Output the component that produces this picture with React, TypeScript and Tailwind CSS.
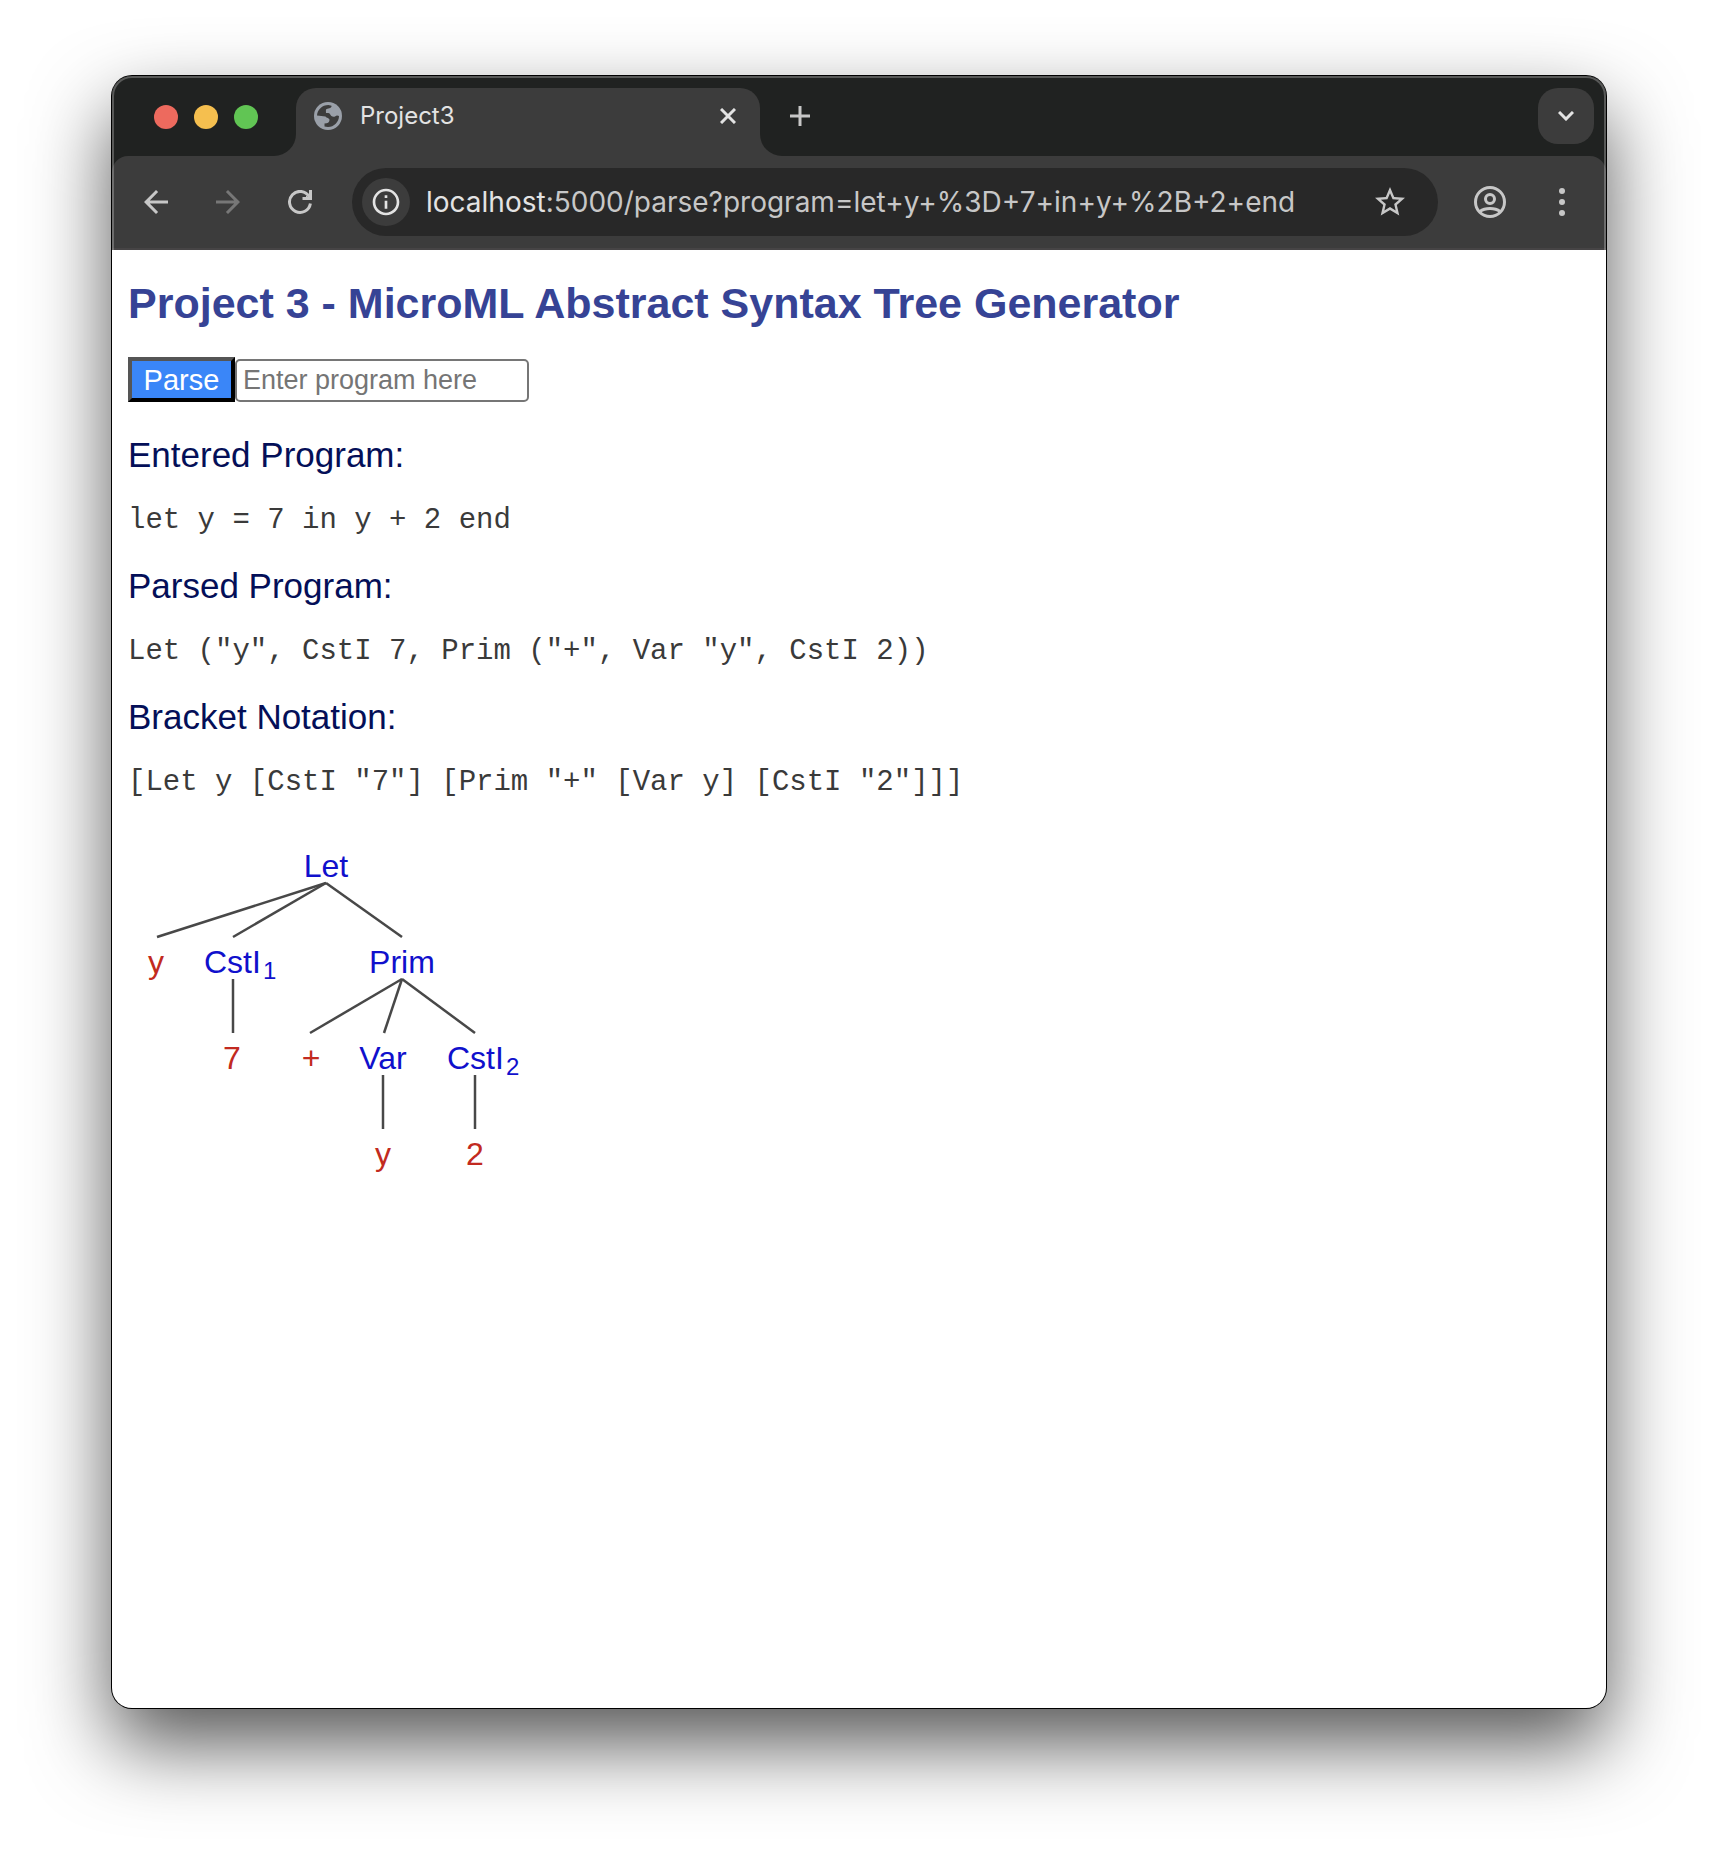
import type { ReactNode } from "react";
import { MdArrowBack, MdArrowForward, MdOutlineInfo, MdStarOutline } from "react-icons/md";

function GlobeIcon() {
  return (
    <svg viewBox="0 0 28 28" className="size-7" aria-hidden="true">
      <circle cx="14" cy="14" r="14" fill="#9aa0a9" />
      <path
        d="M3 13.500 C3.300 8 8 3 14.500 3 L17.500 3.800 C18 6 15 6.500 12.500 7 C11.500 8 12 9.500 12 11 C13.500 11 15 10.500 16 12 C16.500 14 19 15.500 21 14.500 C22.500 13 24 13.500 25 14 C25 20 20 25 14 25 C12.500 25 11.500 24.800 10.500 24.500 L10.500 21.500 C13.500 21.500 15.500 20.500 15.500 18 C15.500 16 12.500 16 11.500 14.500 Z"
        fill="#3c3c3c"
      />
    </svg>
  );
}

function ReloadIcon() {
  return (
    <svg viewBox="0 0 24 24" className="size-6" fill="none" stroke="currentColor" strokeWidth="3" aria-hidden="true">
      <path d="M21.200 6.800 A10.500 10.500 0 1 0 22.400 13.500" />
      <path d="M22.500 0 V8.500 H14.500" />
      <path d="M16.500 8.500 L22.500 2.500" strokeWidth="1" />
    </svg>
  );
}

function ProfileIcon() {
  return (
    <svg viewBox="0 0 32 32" className="size-8" fill="none" stroke="currentColor" strokeWidth="3" aria-hidden="true">
      <circle cx="16" cy="16" r="14.500" />
      <circle cx="16" cy="13" r="4.500" />
      <path d="M6 25.500 C11 21.500 21 21.500 26 25.500" />
    </svg>
  );
}

function MenuDotsIcon() {
  return (
    <svg viewBox="0 0 6 28" className="h-7 w-[6px]" fill="currentColor" aria-hidden="true">
      <circle cx="3" cy="3" r="3" />
      <circle cx="3" cy="14" r="3" />
      <circle cx="3" cy="25" r="3" />
    </svg>
  );
}

function Section({ title, children }: { title: string; children: ReactNode }) {
  return (
    <section>
      <h2 className="font-['Liberation_Sans',Arial,sans-serif] text-[35px] leading-[40px] text-[#040f58]">{title}</h2>
      <p className="my-[29px] font-['Liberation_Mono','Courier_New',monospace] text-[29px] leading-[33px] text-[#3a3a3a]">
        {children}
      </p>
    </section>
  );
}

type TreeNode = { label: string; sub?: string; x: number; y: number; leaf?: boolean };

const nodes: TreeNode[] = [
  { label: "Let", x: 198, y: 49 },
  { label: "y", x: 28, y: 145, leaf: true },
  { label: "CstI", sub: "1", x: 76, y: 145 },
  { label: "Prim", x: 274, y: 145 },
  { label: "7", x: 104, y: 241, leaf: true },
  { label: "+", x: 183, y: 241, leaf: true },
  { label: "Var", x: 255, y: 241 },
  { label: "CstI", sub: "2", x: 319, y: 241 },
  { label: "y", x: 255, y: 337, leaf: true },
  { label: "2", x: 347, y: 337, leaf: true },
];

const edges = [
  [198, 55, 29, 109],
  [198, 55, 105, 109],
  [198, 55, 274, 109],
  [105, 151, 105, 205],
  [274, 151, 182, 205],
  [274, 151, 256, 205],
  [274, 151, 347, 205],
  [255, 247, 255, 301],
  [347, 247, 347, 301],
];

function SyntaxTree() {
  return (
    <svg width="410" height="360" viewBox="0 0 410 360" role="img" aria-label="Abstract syntax tree">
      {edges.map(([x1, y1, x2, y2], i) => (
        <line key={i} x1={x1} y1={y1} x2={x2} y2={y2} stroke="#484848" strokeWidth="2.500" />
      ))}
      {nodes.map((n, i) => (
        <text
          key={i}
          x={n.x}
          y={n.y}
          textAnchor={n.sub ? "start" : "middle"}
          fill={n.leaf ? "#c22a20" : "#1010cc"}
          className="font-['Liberation_Sans',Arial,sans-serif] text-[32px]"
        >
          {n.label}
          {n.sub && (
            <tspan dx="2" dy="6" className="text-[24px]">
              {n.sub}
            </tspan>
          )}
        </text>
      ))}
    </svg>
  );
}

export default function App() {
  return (
    <div className="flex min-h-screen flex-col bg-white px-[112px] pt-[76px] pb-[148px]">
      <div className="flex flex-1 flex-col overflow-hidden rounded-[20px] bg-white shadow-[0_0_0_1px_#000000,0_36px_80px_rgba(0,0,0,0.67)]">
        <header className="relative bg-[#202221] text-[#c7c7c7]">
          <div className="flex h-20 bg-[#3c3c3c]">
            <div className="flex w-46 items-center gap-4 rounded-br-[22px] bg-[#202221] pt-0.5 pl-[42px]">
              <button aria-label="Close window" className="size-6 rounded-full bg-[#ed6a5e]" />
              <button aria-label="Minimize window" className="size-6 rounded-full bg-[#f5bf4f]" />
              <button aria-label="Zoom window" className="size-6 rounded-full bg-[#61c554]" />
            </div>
            <div className="w-[464px] bg-[#202221] pt-3">
              <div className="flex h-full items-start rounded-t-[20px] bg-[#3c3c3c] px-[18px] pt-3">
                <div className="flex h-8 flex-1 items-center">
                  <GlobeIcon />
                  <span className="ml-[18px] flex-1 font-[Inter,sans-serif] text-[24px] leading-8 text-[#e3e3e3]">Project3</span>
                  <button aria-label="Close tab" className="flex size-7 items-center justify-center text-[#e3e3e3]">
                    <svg viewBox="0 0 16 16" className="size-4" stroke="currentColor" strokeWidth="3"><path d="M1 1 L15 15 M15 1 L1 15" /></svg>
                  </button>
                </div>
              </div>
            </div>
            <div className="flex flex-1 items-start justify-between rounded-bl-[22px] bg-[#202221] px-3 pt-3">
              <button aria-label="New tab" className="flex size-14 items-center justify-center">
                <svg viewBox="0 0 20 20" className="size-5" stroke="currentColor" strokeWidth="3"><path d="M10 0 V20 M0 10 H20" /></svg>
              </button>
              <button aria-label="Search tabs" className="flex size-14 items-center justify-center rounded-[20px] bg-[#3c3c3c] text-[#e3e3e3]">
                <svg viewBox="0 0 16 10" className="h-[10px] w-4" fill="none" stroke="currentColor" strokeWidth="3"><path d="M1 1 L8 8 L15 1" /></svg>
              </button>
            </div>
          </div>
          <div className="flex h-[94px] items-center rounded-t-[16px] border-b-2 border-[#464445] bg-[#3c3c3c] pr-[41px] pl-[26px]">
            <div className="flex gap-9 pr-[34px]">
              <button aria-label="Back" className="flex size-9 items-center justify-center"><MdArrowBack size={36} /></button>
              <button aria-label="Forward" className="flex size-9 items-center justify-center text-[#777777]"><MdArrowForward size={36} /></button>
              <button aria-label="Reload" className="flex size-9 items-center justify-center"><ReloadIcon /></button>
            </div>
            <div className="flex h-[68px] flex-1 items-center rounded-full bg-[#282828] pr-[30px] pl-[10px]">
              <button aria-label="Site information" className="flex size-12 items-center justify-center rounded-full bg-[#3c3c3c] text-[#e3e3e3]">
                <MdOutlineInfo size={32} />
              </button>
              <span className="ml-4 flex-1 font-[Inter,sans-serif] text-[28px] leading-9 text-[#c7c7c7]">
                <span className="text-[#e3e3e3]">localhost</span>:5000/parse?program=let+y+%3D+7+in+y+%2B+2+end
              </span>
              <button aria-label="Bookmark this page"><MdStarOutline size={36} /></button>
            </div>
            <button aria-label="Profile" className="ml-9"><ProfileIcon /></button>
            <button aria-label="Menu" className="ml-[53px]"><MenuDotsIcon /></button>
          </div>
          <div className="pointer-events-none absolute inset-0 rounded-t-[20px] border-x-2 border-t-2 border-white/25" />
        </header>
        <main className="flex-1 px-4 pt-[27px]">
          <h1 className="font-['Liberation_Sans',Arial,sans-serif] text-[43px] leading-[52px] font-bold text-[#364395]">
            Project 3 - MicroML Abstract Syntax Tree Generator
          </h1>
          <form className="mt-7 mb-[33px] flex items-end font-['Liberation_Sans',Arial,sans-serif]">
            <button
              type="submit"
              className="h-[45px] w-[107px] border-4 border-t-[#555555] border-r-black border-b-black border-l-[#555555] bg-[#3a86f8] text-[29px] leading-8 text-white"
            >
              Parse
            </button>
            <input
              type="text"
              aria-label="Program"
              placeholder="Enter program here"
              className="h-[43px] w-[294px] rounded-[5px] border-2 border-[#767676] bg-white px-[6px] text-[27px] text-black placeholder:text-[#757575]"
            />
          </form>
          <Section title="Entered Program:">let y = 7 in y + 2 end</Section>
          <Section title="Parsed Program:">Let ("y", CstI 7, Prim ("+", Var "y", CstI 2))</Section>
          <Section title="Bracket Notation:">[Let y [CstI "7"] [Prim "+" [Var y] [CstI "2"]]]</Section>
          <SyntaxTree />
        </main>
      </div>
    </div>
  );
}
